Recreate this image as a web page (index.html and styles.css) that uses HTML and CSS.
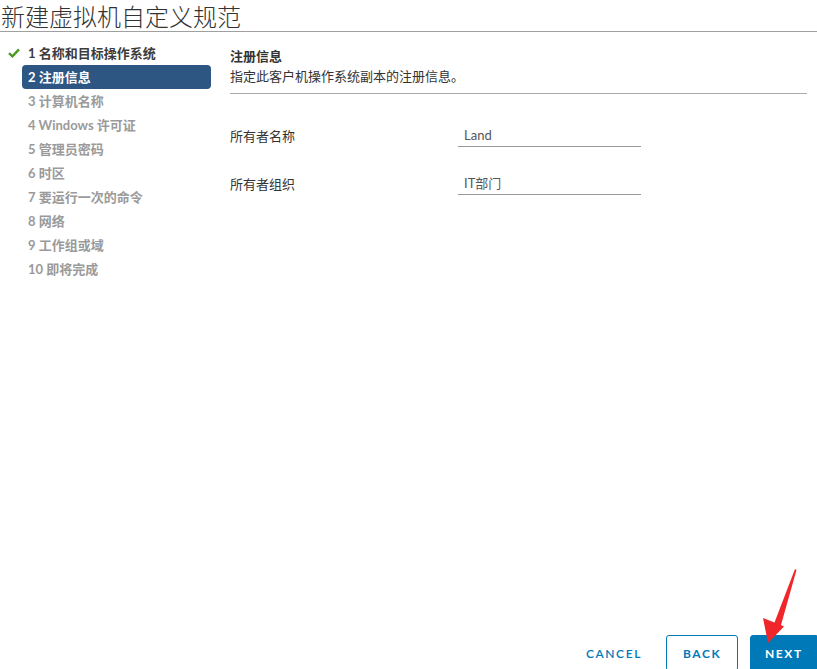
FILE: index.html
```html
<!DOCTYPE html>
<html lang="zh-CN">
<head>
  <meta charset="UTF-8">
  <title>新建虚拟机自定义规范</title>
  <link rel="stylesheet" href="styles.css">
</head>
<body>
  <div class="page">
    <header class="title-bar"><h1>新建虚拟机自定义规范</h1></header>

    <div class="wizard">
      <ul class="steps">
        <li class="step done">
          <svg class="check" width="12" height="10" viewBox="0 0 12 10"><path d="M1 5.2 L4.4 8.4 L11 1.4" fill="none" stroke="#4a9a1c" stroke-width="2.3"/></svg>
          1 名称和目标操作系统
        </li>
        <li class="step active">2 注册信息</li>
        <li class="step">3 计算机名称</li>
        <li class="step">4 Windows 许可证</li>
        <li class="step">5 管理员密码</li>
        <li class="step">6 时区</li>
        <li class="step">7 要运行一次的命令</li>
        <li class="step">8 网络</li>
        <li class="step">9 工作组或域</li>
        <li class="step">10 即将完成</li>
      </ul>

      <section class="content">
        <div class="content-head">
          <h2>注册信息</h2>
          <p>指定此客户机操作系统副本的注册信息。</p>
        </div>
        <div class="form">
          <div class="form-row">
            <label>所有者名称</label>
            <input type="text" value="Land">
          </div>
          <div class="form-row">
            <label>所有者组织</label>
            <input type="text" value="IT部门">
          </div>
        </div>
      </section>
    </div>

    <footer class="actions">
      <button class="btn btn-link">CANCEL</button>
      <button class="btn btn-outline">BACK</button>
      <button class="btn btn-primary">NEXT</button>
    </footer>

    <svg class="arrow" width="45" height="80" viewBox="0 0 45 80">
      <polygon points="40,4 41.5,5 26,60 29,61.5 13,78 8,53 19.5,57.5" fill="#f0262b"/>
    </svg>
  </div>
</body>
</html>
```

FILE: styles.css
```css
* { box-sizing: border-box; margin: 0; padding: 0; }
body { font-family: Lato, "Noto Sans CJK SC", sans-serif; background-color: #fff; color: #333; }
.page { position: relative; height: 669px; overflow: hidden; display: flex; flex-direction: column; }

.title-bar { height: 32px; padding-left: 1px; border-bottom: 1px solid #a0a0a0; display: flex; align-items: center; }
.title-bar h1 { font-family: "Noto Sans CJK SC", sans-serif; font-size: 24px; font-weight: 300; line-height: 30px; color: #333; }

.wizard { flex: 1; display: flex; }
.steps { list-style: none; width: 230px; padding: 9px 19px 0 22px; }
.step { position: relative; height: 24px; line-height: 24px; padding-left: 6px; font-size: 13px; font-weight: 700; color: #9a9a9a; border-radius: 4px; }
.step.done { color: #3c3c3c; }
.step.active { background-color: #2d5683; color: #fff; }
.check { position: absolute; left: -14px; top: 7px; }

.content { flex: 1; padding: 14px 10px 0 0; }
.content-head { border-bottom: 1px solid #aaa; padding-bottom: 7px; }
.content-head h2 { font-size: 13px; font-weight: 700; line-height: 20px; color: #333; }
.content-head p { font-size: 13px; line-height: 20px; color: #333; }

.form { padding-top: 29px; display: flex; flex-direction: column; gap: 24px; }
.form-row { display: flex; align-items: center; height: 24px; }
.form-row label { width: 228px; font-size: 13px; color: #333; }
.form-row input { width: 183px; height: 24px; border: none; border-bottom: 1px solid #9a9a9a; padding: 0 6px; font-family: Lato, "Noto Sans CJK SC", sans-serif; font-size: 13px; color: #555; outline: none; background: transparent; }

.actions { height: 34px; display: flex; justify-content: flex-end; align-items: flex-start; gap: 12px; }
.btn { height: 36px; font-family: Lato, sans-serif; font-size: 12px; font-weight: 700; letter-spacing: 1.6px; border-radius: 3px; cursor: pointer; background: #fff; }
.btn-link { border: none; color: #0079b8; padding: 0 12px; font-weight: 600; }
.btn-outline { border: 1px solid #0079b8; color: #0079b8; padding: 0 16px; width: 72px; }
.btn-primary { border: 1px solid #0079b8; background-color: #0079b8; color: #fff; width: 67px; padding: 0 14px; border-radius: 3px 0 0 0; }

.arrow { position: absolute; left: 755px; top: 565px; }
```
